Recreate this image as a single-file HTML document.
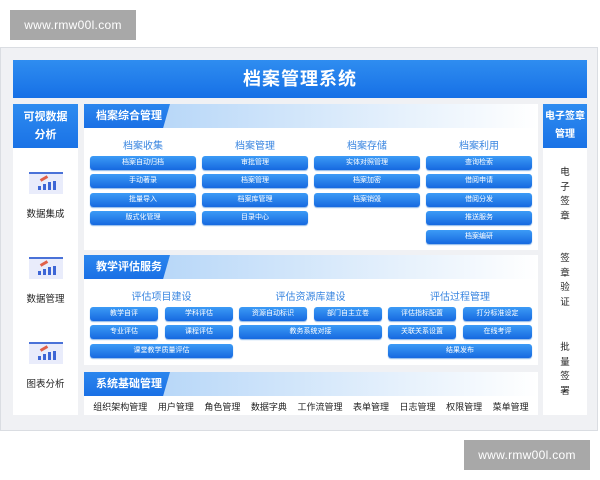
<!DOCTYPE html>
<html><head><meta charset="utf-8"><style>
*{margin:0;padding:0;box-sizing:border-box}
body{width:600px;height:480px;background:#fff;position:relative;overflow:hidden;font-family:"Liberation Sans","Noto Sans CJK SC",sans-serif}
.a{position:absolute}
.wm{background:#a8a8a8;color:#fff;font-size:12px;text-align:center;line-height:30px;letter-spacing:0.3px}
.panel{left:0;top:47px;width:598px;height:384px;background:#f0f1f4;border:1px solid #dadde2}
.title{left:13px;top:60px;width:574px;height:38px;background:linear-gradient(#2f8df0,#1670e6);color:#fff;font-size:18px;font-weight:bold;text-align:center;line-height:38px;letter-spacing:1px}
.col{background:#fff}
.colh{background:linear-gradient(#2e8cf0,#1a72e6);color:#fff;font-size:11px;font-weight:bold;text-align:center;line-height:18px;padding-top:4px}
.sec{background:#fff}
.sh{position:absolute;left:0;top:0;width:100%;height:24px;background:linear-gradient(90deg,#a9cff7,#e6f1fc 70%,#fff)}
.sl{position:absolute;left:0;top:0;height:24px;width:86px;background:linear-gradient(#2b86ee,#1a70e5);color:#fff;font-size:11px;font-weight:bold;line-height:24px;padding-left:12px;clip-path:polygon(0 0,100% 0,92% 100%,0 100%)}
.hd{color:#3a86e0;font-size:10px;text-align:center}
.b{position:absolute;height:14px;border-radius:3px;background:linear-gradient(#3c9bf6,#1669e0);color:#fff;font-size:7px;text-align:center;line-height:14px;box-shadow:0 1px 1px #8bb6e8}
.ic{width:34px;height:22px;background:#e9ecfb;border-top:2px solid #4a72d8}
.ic i{position:absolute;bottom:4px;width:3px;background:#3d66d6}
.ic s{position:absolute;left:11px;top:3px;width:8px;height:3px;background:#e0604a;transform:rotate(-30deg)}
.lb{font-size:9.5px;color:#222;text-align:center;width:65px}
.vt{font-size:9.5px;color:#222;text-align:center;width:44px;line-height:14.5px}
</style></head><body>
<div class="a wm" style="left:10px;top:10px;width:126px;height:30px">www.rmw00l.com</div>
<div class="a panel"></div>
<div class="a title">档案管理系统</div>

<div class="a col" style="left:13px;top:104px;width:65px;height:311px"></div>
<div class="a colh" style="left:13px;top:104px;width:65px;height:44px">可视数据<br>分析</div>
<div class="a ic" style="left:29px;top:172px"><s></s><i style="left:9px;height:4px"></i><i style="left:14px;height:6px"></i><i style="left:19px;height:8px"></i><i style="left:24px;height:9px"></i></div>
<div class="a lb" style="left:13px;top:206px">数据集成</div>
<div class="a ic" style="left:29px;top:257px"><s></s><i style="left:9px;height:4px"></i><i style="left:14px;height:6px"></i><i style="left:19px;height:8px"></i><i style="left:24px;height:9px"></i></div>
<div class="a lb" style="left:13px;top:291px">数据管理</div>
<div class="a ic" style="left:29px;top:342px"><s></s><i style="left:9px;height:4px"></i><i style="left:14px;height:6px"></i><i style="left:19px;height:8px"></i><i style="left:24px;height:9px"></i></div>
<div class="a lb" style="left:13px;top:376px">图表分析</div>

<div class="a col" style="left:543px;top:104px;width:44px;height:311px"></div>
<div class="a colh" style="left:543px;top:104px;width:44px;height:44px;font-size:10px">电子签章<br>管理</div>
<div class="a vt" style="left:543px;top:166px">电<br>子<br>签<br>章</div>
<div class="a vt" style="left:543px;top:252px">签<br>章<br>验<br>证</div>
<div class="a vt" style="left:543px;top:341px">批<br>量<br>签<br>署</div>

<div class="a sec" style="left:84px;top:104px;width:454px;height:146px"><div class="sh"></div><div class="sl">档案综合管理</div></div>
<div class="a hd" style="left:90px;top:137px;width:106px">档案收集</div>
<div class="a hd" style="left:202px;top:137px;width:106px">档案管理</div>
<div class="a hd" style="left:314px;top:137px;width:106px">档案存储</div>
<div class="a hd" style="left:426px;top:137px;width:106px">档案利用</div>
<div class="b" style="left:90px;top:156px;width:106px">档案自动归档</div>
<div class="b" style="left:90px;top:174px;width:106px">手动著录</div>
<div class="b" style="left:90px;top:193px;width:106px">批量导入</div>
<div class="b" style="left:90px;top:211px;width:106px">版式化管理</div>
<div class="b" style="left:202px;top:156px;width:106px">审批管理</div>
<div class="b" style="left:202px;top:174px;width:106px">档案管理</div>
<div class="b" style="left:202px;top:193px;width:106px">档案库管理</div>
<div class="b" style="left:202px;top:211px;width:106px">目录中心</div>
<div class="b" style="left:314px;top:156px;width:106px">实体对照管理</div>
<div class="b" style="left:314px;top:174px;width:106px">档案加密</div>
<div class="b" style="left:314px;top:193px;width:106px">档案销毁</div>
<div class="b" style="left:426px;top:156px;width:106px">查询检索</div>
<div class="b" style="left:426px;top:174px;width:106px">借阅申请</div>
<div class="b" style="left:426px;top:193px;width:106px">借阅分发</div>
<div class="b" style="left:426px;top:211px;width:106px">推送服务</div>
<div class="b" style="left:426px;top:230px;width:106px">档案编研</div>

<div class="a sec" style="left:84px;top:255px;width:454px;height:110px"><div class="sh"></div><div class="sl">教学评估服务</div></div>
<div class="a hd" style="left:90px;top:288px;width:143px">评估项目建设</div>
<div class="a hd" style="left:239px;top:288px;width:143px">评估资源库建设</div>
<div class="a hd" style="left:388px;top:288px;width:144px">评估过程管理</div>
<div class="b" style="left:90px;top:307px;width:68px">教学自评</div>
<div class="b" style="left:165px;top:307px;width:68px">学科评估</div>
<div class="b" style="left:239px;top:307px;width:68px">资源自动标识</div>
<div class="b" style="left:314px;top:307px;width:68px">部门自主立卷</div>
<div class="b" style="left:388px;top:307px;width:68px">评估指标配置</div>
<div class="b" style="left:463px;top:307px;width:69px">打分标准设定</div>
<div class="b" style="left:90px;top:325px;width:68px">专业评估</div>
<div class="b" style="left:165px;top:325px;width:68px">课程评估</div>
<div class="b" style="left:239px;top:325px;width:143px">教务系统对接</div>
<div class="b" style="left:388px;top:325px;width:68px">关联关系设置</div>
<div class="b" style="left:463px;top:325px;width:69px">在线考评</div>
<div class="b" style="left:90px;top:344px;width:143px">课堂教学质量评估</div>
<div class="b" style="left:388px;top:344px;width:144px">结果发布</div>

<div class="a sec" style="left:84px;top:372px;width:454px;height:43px"><div class="sh"></div><div class="sl">系统基础管理</div></div>
<div class="a" style="left:84px;top:400px;width:454px;display:flex;justify-content:space-around;padding:0 4px;font-size:9px;color:#222"><span>组织架构管理</span><span>用户管理</span><span>角色管理</span><span>数据字典</span><span>工作流管理</span><span>表单管理</span><span>日志管理</span><span>权限管理</span><span>菜单管理</span></div>

<div class="a wm" style="left:464px;top:440px;width:126px;height:30px">www.rmw00l.com</div>
</body></html>
